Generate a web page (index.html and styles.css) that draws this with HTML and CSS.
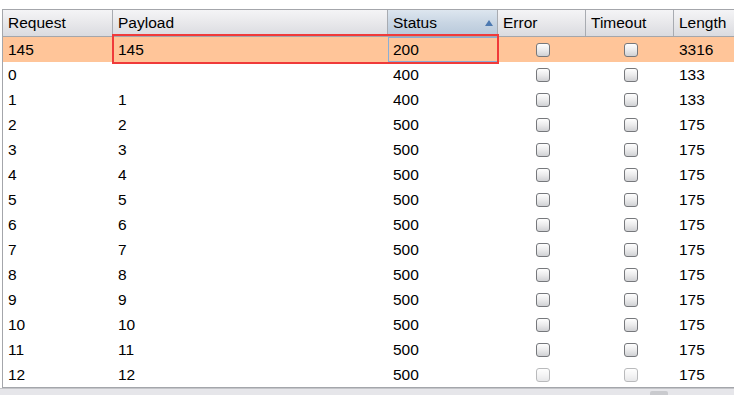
FILE: index.html
```html
<!DOCTYPE html>
<html>
<head>
<meta charset="utf-8">
<link rel="stylesheet" href="styles.css">
</head>
<body>
<div class="wrap">
  <div class="table">
    <div class="row head">
      <div class="c c1">Request</div>
      <div class="c c2">Payload</div>
      <div class="c c3 sorted">Status<span class="arrow"></span></div>
      <div class="c c4">Error</div>
      <div class="c c5">Timeout</div>
      <div class="c c6">Length</div>
    </div>
    <div class="row sel">
      <div class="c c1">145</div>
      <div class="c c2">145</div>
      <div class="c c3 focus">200</div>
      <div class="c c4"><span class="cb"></span></div>
      <div class="c c5"><span class="cb"></span></div>
      <div class="c c6">3316</div>
    </div>
    <div class="row"><div class="c c1">0</div><div class="c c2"></div><div class="c c3">400</div><div class="c c4"><span class="cb"></span></div><div class="c c5"><span class="cb"></span></div><div class="c c6">133</div></div>
    <div class="row"><div class="c c1">1</div><div class="c c2">1</div><div class="c c3">400</div><div class="c c4"><span class="cb"></span></div><div class="c c5"><span class="cb"></span></div><div class="c c6">133</div></div>
    <div class="row"><div class="c c1">2</div><div class="c c2">2</div><div class="c c3">500</div><div class="c c4"><span class="cb"></span></div><div class="c c5"><span class="cb"></span></div><div class="c c6">175</div></div>
    <div class="row"><div class="c c1">3</div><div class="c c2">3</div><div class="c c3">500</div><div class="c c4"><span class="cb"></span></div><div class="c c5"><span class="cb"></span></div><div class="c c6">175</div></div>
    <div class="row"><div class="c c1">4</div><div class="c c2">4</div><div class="c c3">500</div><div class="c c4"><span class="cb"></span></div><div class="c c5"><span class="cb"></span></div><div class="c c6">175</div></div>
    <div class="row"><div class="c c1">5</div><div class="c c2">5</div><div class="c c3">500</div><div class="c c4"><span class="cb"></span></div><div class="c c5"><span class="cb"></span></div><div class="c c6">175</div></div>
    <div class="row"><div class="c c1">6</div><div class="c c2">6</div><div class="c c3">500</div><div class="c c4"><span class="cb"></span></div><div class="c c5"><span class="cb"></span></div><div class="c c6">175</div></div>
    <div class="row"><div class="c c1">7</div><div class="c c2">7</div><div class="c c3">500</div><div class="c c4"><span class="cb"></span></div><div class="c c5"><span class="cb"></span></div><div class="c c6">175</div></div>
    <div class="row"><div class="c c1">8</div><div class="c c2">8</div><div class="c c3">500</div><div class="c c4"><span class="cb"></span></div><div class="c c5"><span class="cb"></span></div><div class="c c6">175</div></div>
    <div class="row"><div class="c c1">9</div><div class="c c2">9</div><div class="c c3">500</div><div class="c c4"><span class="cb"></span></div><div class="c c5"><span class="cb"></span></div><div class="c c6">175</div></div>
    <div class="row"><div class="c c1">10</div><div class="c c2">10</div><div class="c c3">500</div><div class="c c4"><span class="cb"></span></div><div class="c c5"><span class="cb"></span></div><div class="c c6">175</div></div>
    <div class="row"><div class="c c1">11</div><div class="c c2">11</div><div class="c c3">500</div><div class="c c4"><span class="cb"></span></div><div class="c c5"><span class="cb"></span></div><div class="c c6">175</div></div>
    <div class="row"><div class="c c1">12</div><div class="c c2">12</div><div class="c c3">500</div><div class="c c4"><span class="cb faded"></span></div><div class="c c5"><span class="cb faded"></span></div><div class="c c6">175</div></div>
    <div class="highlight"></div>
  </div>
  <div class="hscroll"><span class="thumb"></span></div>
</div>
</body>
</html>
```

FILE: styles.css
```css
html, body {
  margin: 0;
  padding: 0;
  background: #ffffff;
  overflow: hidden;
}
.wrap {
  width: 734px;
  height: 395px;
  padding-top: 9px;
  padding-left: 2px;
  box-sizing: border-box;
  overflow: hidden;
  font-family: "Liberation Sans", Arial, sans-serif;
  font-size: 15.5px;
  color: #000;
}
.table {
  position: relative;
  border-top: 1px solid #a4a6ab;
  border-left: 1px solid #a4a6ab;
  border-bottom: 1px solid #a4a6ab;
  width: 760px;
}
.row {
  display: grid;
  grid-template-columns: 110px 275px 110px 88px 88px 100px;
  height: 25px;
}
.row.head {
  height: 26px;
  border-bottom: 1px solid #a4a6ab;
  background: linear-gradient(#f4f4f6, #e8e8eb 50%, #dadbe0);
}
.c {
  padding-left: 5px;
  padding-top: 1px;
  display: flex;
  align-items: center;
  box-sizing: border-box;
  white-space: nowrap;
  overflow: hidden;
}
.head .c {
  padding-top: 0;
  border-right: 1px solid #a8abb1;
  position: relative;
}
.head .sorted {
  background: linear-gradient(#dde6ef, #c8d5e3 50%, #b7c8da);
}
.arrow {
  position: absolute;
  right: 4px;
  top: 10px;
  width: 0;
  height: 0;
  border-left: 4px solid transparent;
  border-right: 4px solid transparent;
  border-bottom: 6px solid #4c79b1;
}
.c4, .c5 {
  justify-content: center;
  padding-left: 0;
}
.head .c4, .head .c5 {
  justify-content: flex-start;
  padding-left: 5px;
}
.sel {
  background: #ffc599;
}
.sel .focus {
  border: 1px solid #8aaed6;
  padding-left: 4px;
  padding-top: 0;
}
.cb {
  display: block;
  width: 14px;
  height: 14px;
  box-sizing: border-box;
  border: 1px solid #76787c;
  border-radius: 3px;
  background: linear-gradient(#fefefe, #ebebec 50%, #d0d1d4);
  margin-left: 1px;
}
.cb.faded {
  opacity: 0.5;
}
.highlight {
  position: absolute;
  left: 109px;
  top: 24px;
  width: 387px;
  height: 30px;
  border: 2px solid #f03a3a;
  box-sizing: border-box;
  pointer-events: none;
}
.hscroll {
  position: relative;
  height: 7px;
  margin-left: -2px;
  width: 734px;
  background: #e6e6ea;
  border-top: 1px solid #c4c5c9;
}
.thumb {
  position: absolute;
  left: 650px;
  top: 2px;
  width: 18px;
  height: 6px;
  background: #c9cace;
  border-radius: 2px;
}
```
